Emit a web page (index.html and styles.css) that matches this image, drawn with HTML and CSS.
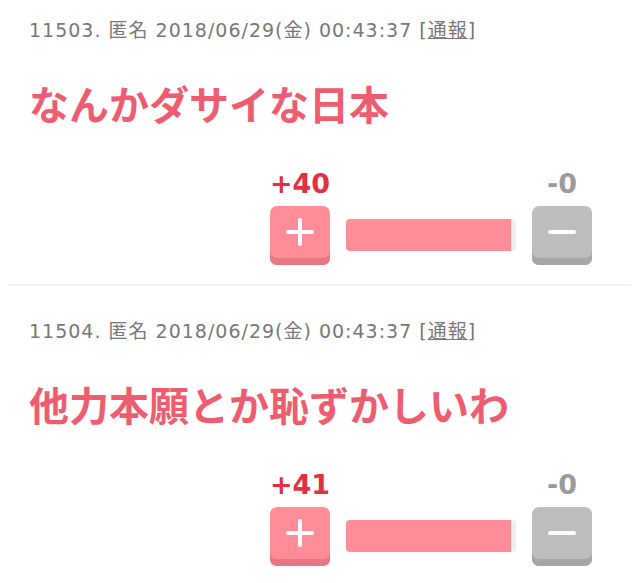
FILE: index.html
```html
<!DOCTYPE html>
<html lang="ja">
<head>
<meta charset="UTF-8" />
<meta name="viewport" content="width=device-width, initial-scale=1.0"/>
<title>コメント</title>
<link rel="stylesheet" href="styles.css">
</head>
<body>
  <div class="comments">
    <div class="post">
      <div class="meta">11503. 匿名 2018/06/29(金) 00:43:37 [<a href="#">通報</a>]</div>
      <div class="body">なんかダサイな日本</div>
      <div class="vote">
        <div class="vote-col">
          <div class="count plus">+40</div>
          <button class="btn btn-plus"><span class="icon-plus"></span></button>
        </div>
        <div class="bar"><div class="bar-fill" style="width: 97%"></div></div>
        <div class="vote-col">
          <div class="count minus">-0</div>
          <button class="btn btn-minus"><span class="icon-minus"></span></button>
        </div>
      </div>
    </div>

    <div class="post">
      <div class="meta">11504. 匿名 2018/06/29(金) 00:43:37 [<a href="#">通報</a>]</div>
      <div class="body">他力本願とか恥ずかしいわ</div>
      <div class="vote">
        <div class="vote-col">
          <div class="count plus">+41</div>
          <button class="btn btn-plus"><span class="icon-plus"></span></button>
        </div>
        <div class="bar"><div class="bar-fill" style="width: 97%"></div></div>
        <div class="vote-col">
          <div class="count minus">-0</div>
          <button class="btn btn-minus"><span class="icon-minus"></span></button>
        </div>
      </div>
    </div>
  </div>
</body>
</html>
```

FILE: styles.css
```css
:root {
  --text: #777;
  --pink: #ee5d6f;
  --red: #e2303f;
  --btn-pink: #ff8c98;
  --btn-pink-dark: #e87683;
  --btn-grey: #bdbdbd;
  --btn-grey-dark: #a6a6a6;
  --font: "Noto Sans CJK JP", "Noto Sans", sans-serif;
}

body {
  margin: 0;
  background: #fff;
  font-family: var(--font);
}

.comments {
  margin: 0 8px;
}

.post {
  padding: 31px 21px 19px;
  border-bottom: 2px solid #f2f2f2;
}

.post:first-child {
  padding-top: 16px;
}

.meta {
  font-family: "DejaVu Sans", "Noto Sans CJK JP", sans-serif;
  font-size: 19px;
  letter-spacing: 1px;
  line-height: 28px;
  color: var(--text);
}

.meta a {
  color: var(--text);
}

.body {
  margin-top: 34px;
  font-size: 40px;
  line-height: 50px;
  font-weight: bold;
  color: var(--pink);
}

.vote {
  display: flex;
  justify-content: flex-end;
  align-items: flex-end;
  margin-top: 41px;
  padding-right: 18px;
}

.vote-col {
  width: 60px;
  display: flex;
  flex-direction: column;
  align-items: center;
}

.count {
  font-family: "DejaVu Sans", sans-serif;
  font-weight: bold;
  font-size: 27px;
  line-height: 30px;
  margin-bottom: 7px;
}

.count.plus { color: var(--red); }
.count.minus { color: #9a9a9a; }

.btn {
  width: 60px;
  height: 59px;
  border: none;
  border-radius: 7px;
  padding: 0 0 7px;
  cursor: pointer;
  display: flex;
  justify-content: center;
  align-items: center;
}

.btn-plus {
  background: var(--btn-pink);
  box-shadow: inset 0 -7px 0 var(--btn-pink-dark);
}

.btn-minus {
  background: var(--btn-grey);
  box-shadow: inset 0 -7px 0 var(--btn-grey-dark);
}

.icon-plus, .icon-minus {
  position: relative;
  width: 28px;
  height: 4px;
  background: #fff;
  border-radius: 2px;
}

.icon-plus::after {
  content: "";
  position: absolute;
  left: 12px;
  top: -12px;
  width: 4px;
  height: 28px;
  background: #fff;
  border-radius: 2px;
}

.bar {
  width: 170px;
  height: 32px;
  margin: 0 16px 14px;
  background: #eee;
  border-radius: 4px;
  overflow: hidden;
}

.bar-fill {
  height: 100%;
  background: var(--btn-pink);
}
```
